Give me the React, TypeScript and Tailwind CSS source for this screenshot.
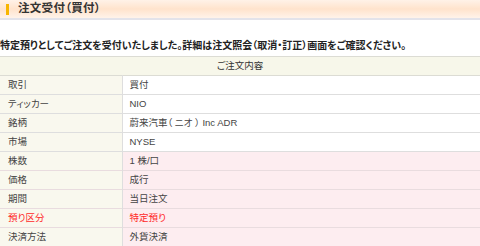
import React from 'react';

const rows = [
  { label: '取引', value: '買付' },
  { label: 'ティッカー', value: 'NIO' },
  { label: '銘柄', value: '蔚来汽車（ ニオ ） Inc ADR' },
  { label: '市場', value: 'NYSE' },
  { label: '株数', value: '1 株/口', pink: true },
  { label: '価格', value: '成行', pink: true },
  { label: '期間', value: '当日注文', pink: true },
  { label: '預り区分', value: '特定預り', pink: true, red: true },
  { label: '決済方法', value: '外貨決済', pink: true },
];

const font = { fontFamily: '"Liberation Sans", "Noto Sans CJK JP", sans-serif', fontFeatureSettings: '"palt"' };

export default function App() {
  return (
    <div className="w-[480px] h-[246px] overflow-hidden bg-white text-[#333]" style={font}>
      {/* title bar */}
      <div className="h-[20px] flex items-center bg-gradient-to-b from-[#fff2e8] via-[#ffe3cc] to-[#fff3ea] border-b-2 border-[#e3e3ea]">
        <div className="ml-[6px] w-[3px] h-[11px] bg-[#f7b500]" />
        <h1 className="ml-[9px] text-[11.5px] tracking-[0.3px] font-bold leading-none text-[#333]">注文受付（買付）</h1>
      </div>

      <p className="mt-[19px] text-[10px] leading-[14px] font-semibold text-[#222]">
        特定預りとしてご注文を受付いたしました。詳細は注文照会（取消・訂正）画面をご確認ください。
      </p>

      <table className="mt-[3px] w-full border-collapse text-[9.5px] text-[#444]">
        <thead>
          <tr className="h-[19px] bg-[#f7f7ea] border-y border-[#dcdcd4]">
            <th colSpan={2} className="font-normal text-center text-[#333]">ご注文内容</th>
          </tr>
        </thead>
        <tbody>
          {rows.map((r) => (
            <tr
              key={r.label}
              className={`h-[19px] border-b ${r.pink ? 'border-[#e9dcdf]' : 'border-[#dedede]'} ${r.red ? 'text-[#ff2a2a]' : ''}`}
            >
              <td className="w-[122px] pl-[8px] bg-[#f9f8ee] border-r border-[#dedede]">{r.label}</td>
              <td className={`pl-[7px] ${r.pink ? 'bg-[#fdedf0]' : 'bg-white'}`}>{r.value}</td>
            </tr>
          ))}
        </tbody>
      </table>
    </div>
  );
}
